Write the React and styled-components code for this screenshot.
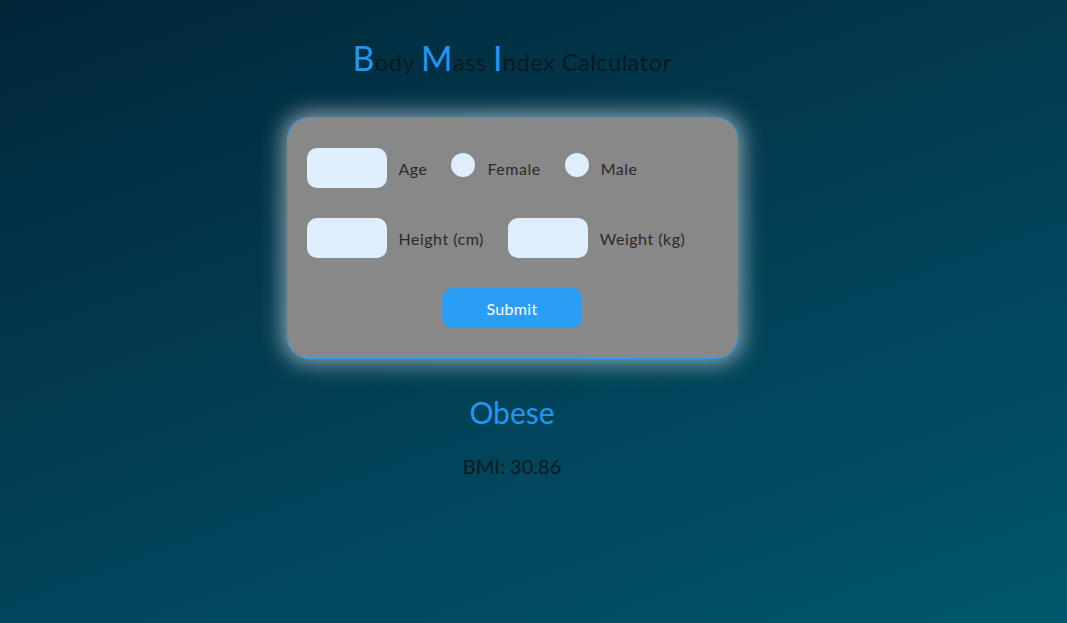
import styled, { createGlobalStyle } from "styled-components"

const GlobalStyle = createGlobalStyle`
    body {
        margin: 0;
        font-family: Lato, "Noto Sans", sans-serif;
    }
`

const Page = styled.div`
    min-height: 100vh;
    background: linear-gradient(160deg, #012638 0%, #023c52 45%, #01576b 100%);
    padding-top: 37px;
    box-sizing: border-box;
`

const Column = styled.div`
    width: 1024px;
    display: flex;
    flex-direction: column;
    align-items: center;
`

const Title = styled.h1`
    margin: 0;
    height: 42px;
    line-height: 42px;
    font-size: 24px;
    font-weight: 400;
    letter-spacing: 0.3px;
    color: #0a1a22;
`

const Cap = styled.span`
    font-size: 34px;
    color: #2196f3;
`

const Card = styled.div`
    margin-top: 38px;
    width: 451px;
    box-sizing: border-box;
    padding: 30px 19px;
    background: #888888;
    border: 1px solid #2a9df4;
    border-radius: 22px;
    box-shadow: 0 0 22px 4px rgba(255, 255, 255, 0.55);
    display: flex;
    flex-direction: column;
    gap: 30px;
`

const Row = styled.div`
    display: flex;
    align-items: center;
    gap: 12px;
    justify-content: ${p => (p.center ? "center" : "flex-start")};
`

const Field = styled.input`
    width: 80px;
    height: 40px;
    box-sizing: border-box;
    border: none;
    border-radius: 10px;
    background: #deeefd;
    outline: none;
    padding: 0 8px;
`

const Radio = styled.span`
    width: 24px;
    height: 24px;
    border-radius: 50%;
    background: #deeefd;
    margin-top: -6px;
`

const Label = styled.label`
    font-size: 16px;
    letter-spacing: 0.5px;
    color: #2a2a2a;
    margin-right: 12px;
`

const Submit = styled.button`
    width: 140px;
    height: 40px;
    border: none;
    border-radius: 10px;
    background: #2a9df4;
    color: #ffffff;
    font-family: inherit;
    font-size: 16px;
    letter-spacing: 0.3px;
`

const Result = styled.div`
    margin-top: 35px;
    font-size: 30px;
    line-height: 36px;
    color: #2196f3;
`

const Score = styled.div`
    margin-top: 24px;
    font-size: 20px;
    line-height: 24px;
    color: #0a1a22;
`

const App = () => {
    return (
        <Page>
            <GlobalStyle />
            <Column>
                <Title>
                    <Cap>B</Cap>ody <Cap>M</Cap>ass <Cap>I</Cap>ndex Calculator
                </Title>
                <Card>
                    <Row>
                        <Field />
                        <Label>Age</Label>
                        <Radio />
                        <Label>Female</Label>
                        <Radio />
                        <Label>Male</Label>
                    </Row>
                    <Row>
                        <Field />
                        <Label>Height (cm)</Label>
                        <Field />
                        <Label>Weight (kg)</Label>
                    </Row>
                    <Row center>
                        <Submit>Submit</Submit>
                    </Row>
                </Card>
                <Result>Obese</Result>
                <Score>BMI: 30.86</Score>
            </Column>
        </Page>
    )
}

export default App
